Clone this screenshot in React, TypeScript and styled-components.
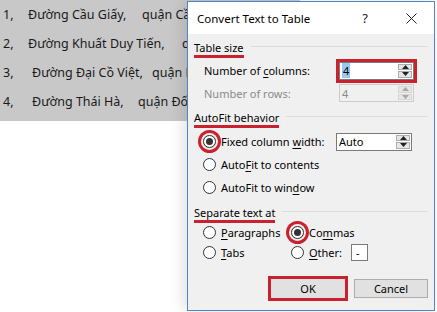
import React from "react";
import styled, { createGlobalStyle, css } from "styled-components";

const GlobalStyle = createGlobalStyle`
  html, body {
    margin: 0;
    padding: 0;
    background: #ffffff;
  }
  body {
    width: 437px;
    height: 312px;
    overflow: hidden;
    position: relative;
  }
`;

const MARK = "#c9212e";
const UI_FONT = `"Noto Sans", "Open Sans", sans-serif`;

/* ---------- document behind the dialog ---------- */

const Document = styled.div`
  width: 300px;
  height: 121px;
  background: #c8c8c8;
  padding-top: 0;
  box-sizing: border-box;
  font-family: ${UI_FONT};
  font-size: 12.5px;
  color: #1a1a1a;
`;

const Line = styled.div`
  display: flex;
  height: 29px;
  align-items: center;
  white-space: nowrap;
`;

const Num = styled.span<{ $w: number }>`
  width: ${({ $w }) => $w}px;
  padding-left: 3px;
  flex: none;
`;

const Street = styled.span<{ $w: number }>`
  width: ${({ $w }) => $w}px;
  flex: none;
`;

/* ---------- dialog ---------- */

const Dialog = styled.div`
  position: absolute;
  left: 187px;
  top: 1px;
  width: 248px;
  height: 310px;
  box-sizing: border-box;
  border: 1px solid #4f85c0;
  background: #f0f0f0;
  box-shadow: -4px 0 14px rgba(0, 0, 0, 0.12);
  font-family: ${UI_FONT};
  font-size: 11px;
  color: #000;
  display: flex;
  flex-direction: column;
`;

const TitleBar = styled.div`
  height: 32px;
  background: #fff;
  display: flex;
  align-items: center;
  padding-left: 9px;
  flex: none;
`;

const Title = styled.div`
  flex: 1;
  font-size: 11.5px;
`;

const TitleButton = styled.div<{ $w: number }>`
  width: ${({ $w }) => $w}px;
  height: 32px;
  display: flex;
  align-items: center;
  justify-content: center;
  font-size: 13px;
  color: #222;
`;

const Body = styled.div`
  padding: 6px 6px 0 6px;
  display: flex;
  flex-direction: column;
`;

const GroupHeader = styled.div<{ $top: number }>`
  display: flex;
  align-items: center;
  margin-top: ${({ $top }) => $top}px;
  height: 17px;
`;

const GroupLabel = styled.span<{ $marked?: boolean }>`
  line-height: 14px;
  padding-top: 1px;
  border-bottom: 3px solid ${({ $marked }) => ($marked ? MARK : "transparent")};
  white-space: nowrap;
`;

const GroupRule = styled.div`
  flex: 1;
  height: 1px;
  background: #dcdcdc;
  margin-left: 7px;
  margin-top: -4px;
`;

const Row = styled.div<{ $h: number; $top?: number; $indent?: number }>`
  height: ${({ $h }) => $h}px;
  margin-top: ${({ $top }) => $top ?? 0}px;
  padding-left: ${({ $indent }) => $indent ?? 0}px;
  display: flex;
  align-items: center;
  white-space: nowrap;
`;

const FieldLabel = styled.span<{ $w: number; $disabled?: boolean }>`
  width: ${({ $w }) => $w}px;
  flex: none;
  color: ${({ $disabled }) => ($disabled ? "#8a8a8a" : "#000")};
`;

const U = styled.span`
  text-decoration: underline;
  text-underline-offset: 2px;
`;

const Marker = styled.div<{ $on?: boolean }>`
  display: flex;
  ${({ $on }) =>
    $on &&
    css`
      outline: 3px solid ${MARK};
      outline-offset: 0;
    `}
`;

const Spin = styled.div<{ $w: number; $disabled?: boolean }>`
  width: ${({ $w }) => $w}px;
  height: 18px;
  box-sizing: border-box;
  border: 1px solid ${({ $disabled }) => ($disabled ? "#cccccc" : "#7a7a7a")};
  background: ${({ $disabled }) => ($disabled ? "#f0f0f0" : "#fff")};
  display: flex;
  color: ${({ $disabled }) => ($disabled ? "#8a8a8a" : "#000")};
`;

const SpinValue = styled.div`
  flex: 1;
  display: flex;
  align-items: center;
  padding-left: 2px;
`;

const Selected = styled.span`
  background: #99c9ef;
  padding: 0 1px;
`;

const SpinButtons = styled.div`
  width: 16px;
  display: flex;
  flex-direction: column;
  gap: 1px;
  padding: 1px;
  box-sizing: border-box;
`;

const SpinButton = styled.div<{ $disabled?: boolean }>`
  flex: 1;
  background: #e6e6e6;
  border: 1px solid ${({ $disabled }) => ($disabled ? "#d6d6d6" : "#adadad")};
  display: flex;
  align-items: center;
  justify-content: center;
`;

const Arrow = ({ up, disabled }: { up?: boolean; disabled?: boolean }) => (
  <svg width="7" height="4" viewBox="0 0 7 4">
    <polygon
      points={up ? "0,4 3.5,0 7,4" : "0,0 3.5,4 7,0"}
      fill={disabled ? "#a8a8a8" : "#222"}
    />
  </svg>
);

const SpinBox = ({
  value,
  w,
  disabled,
  selected,
}: {
  value: string;
  w: number;
  disabled?: boolean;
  selected?: boolean;
}) => (
  <Spin $w={w} $disabled={disabled}>
    <SpinValue>{selected ? <Selected>{value}</Selected> : value}</SpinValue>
    <SpinButtons>
      <SpinButton $disabled={disabled}>
        <Arrow up disabled={disabled} />
      </SpinButton>
      <SpinButton $disabled={disabled}>
        <Arrow disabled={disabled} />
      </SpinButton>
    </SpinButtons>
  </Spin>
);

const RadioWrap = styled.span<{ $marked?: boolean }>`
  width: 13px;
  height: 13px;
  flex: none;
  margin-right: 5px;
  border-radius: 50%;
  ${({ $marked }) =>
    $marked &&
    css`
      box-shadow: 0 0 0 2px #f0f0f0, 0 0 0 5px ${MARK};
    `}
`;

const RadioCircle = styled.span<{ $checked?: boolean }>`
  width: 13px;
  height: 13px;
  box-sizing: border-box;
  border-radius: 50%;
  border: 1px solid #333;
  background: #fff;
  display: flex;
  align-items: center;
  justify-content: center;
  &::after {
    content: "";
    width: 7px;
    height: 7px;
    border-radius: 50%;
    background: ${({ $checked }) => ($checked ? "#333" : "transparent")};
  }
`;

const Radio = ({ checked, marked }: { checked?: boolean; marked?: boolean }) => (
  <RadioWrap $marked={marked}>
    <RadioCircle $checked={checked} />
  </RadioWrap>
);

const RadioCell = styled.div<{ $w?: number }>`
  display: flex;
  align-items: center;
  width: ${({ $w }) => ($w ? `${$w}px` : "auto")};
  flex: none;
`;

const OtherBox = styled.div`
  width: 17px;
  height: 17px;
  box-sizing: border-box;
  border: 1px solid #7a7a7a;
  background: #fff;
  margin-left: 9px;
  display: flex;
  align-items: center;
  padding-left: 4px;
`;

const ButtonRow = styled.div`
  display: flex;
  justify-content: flex-end;
  gap: 9px;
  margin-top: 17px;
`;

const Button = styled.div<{ $marked?: boolean }>`
  width: 74px;
  height: 19px;
  box-sizing: border-box;
  background: #e1e1e1;
  border: 1px solid #adadad;
  display: flex;
  align-items: center;
  justify-content: center;
  ${({ $marked }) =>
    $marked &&
    css`
      outline: 3px solid ${MARK};
      border-color: #e1e1e1;
    `}
`;

const CloseIcon = () => (
  <svg width="11" height="11" viewBox="0 0 11 11">
    <path d="M0.5 0.5 L10.5 10.5 M10.5 0.5 L0.5 10.5" stroke="#222" strokeWidth="1" />
  </svg>
);

const lines = [
  { n: "1,", nw: 25, street: "Đường Cầu Giấy,", sw: 114, rest: "quận Cầu Giấy" },
  { n: "2,", nw: 25, street: "Đường Khuất Duy Tiến,", sw: 154, rest: "quận Thanh Xuân" },
  { n: "3,", nw: 29, street: "Đường Đại Cồ Việt,", sw: 120, rest: "quận Hai Bà Trưng" },
  { n: "4,", nw: 29, street: "Đường Thái Hà,", sw: 106, rest: "quận Đống Đa" },
];

export default function App() {
  return (
    <>
      <GlobalStyle />
      <Document>
        {lines.map((l) => (
          <Line key={l.n}>
            <Num $w={l.nw}>{l.n}</Num>
            <Street $w={l.sw}>{l.street}</Street>
            <span>{l.rest}</span>
          </Line>
        ))}
      </Document>

      <Dialog>
        <TitleBar>
          <Title>Convert Text to Table</Title>
          <TitleButton $w={46}>?</TitleButton>
          <TitleButton $w={46}>
            <CloseIcon />
          </TitleButton>
        </TitleBar>

        <Body>
          <GroupHeader $top={0}>
            <GroupLabel $marked>Table size</GroupLabel>
            <GroupRule />
          </GroupHeader>
          <Row $h={23} $top={2} $indent={10}>
            <FieldLabel $w={135}>
              Number of <U>c</U>olumns:
            </FieldLabel>
            <Marker $on>
              <SpinBox value="4" w={75} selected />
            </Marker>
          </Row>
          <Row $h={20} $top={1} $indent={10}>
            <FieldLabel $w={135} $disabled>
              Number of rows:
            </FieldLabel>
            <SpinBox value="4" w={75} disabled />
          </Row>

          <GroupHeader $top={7}>
            <GroupLabel $marked>AutoFit behavior</GroupLabel>
            <GroupRule />
          </GroupHeader>
          <Row $h={23} $top={3} $indent={9}>
            <RadioCell $w={133}>
              <Radio checked marked />
              <span>
                Fixed column <U>w</U>idth:
              </span>
            </RadioCell>
            <SpinBox value="Auto" w={76} />
          </Row>
          <Row $h={23} $indent={9}>
            <RadioCell>
              <Radio />
              <span>
                Auto<U>F</U>it to contents
              </span>
            </RadioCell>
          </Row>
          <Row $h={23} $indent={9}>
            <RadioCell>
              <Radio />
              <span>
                AutoFit to win<U>d</U>ow
              </span>
            </RadioCell>
          </Row>

          <GroupHeader $top={6}>
            <GroupLabel $marked>Separate text at</GroupLabel>
            <GroupRule />
          </GroupHeader>
          <Row $h={20} $indent={9}>
            <RadioCell $w={88}>
              <Radio />
              <span>
                <U>P</U>aragraphs
              </span>
            </RadioCell>
            <RadioCell>
              <Radio checked marked />
              <span>
                Co<U>m</U>mas
              </span>
            </RadioCell>
          </Row>
          <Row $h={20} $indent={9}>
            <RadioCell $w={88}>
              <Radio />
              <span>
                <U>T</U>abs
              </span>
            </RadioCell>
            <RadioCell>
              <Radio />
              <span>
                <U>O</U>ther:
              </span>
              <OtherBox>-</OtherBox>
            </RadioCell>
          </Row>

          <ButtonRow>
            <Button $marked>OK</Button>
            <Button>Cancel</Button>
          </ButtonRow>
        </Body>
      </Dialog>
    </>
  );
}
